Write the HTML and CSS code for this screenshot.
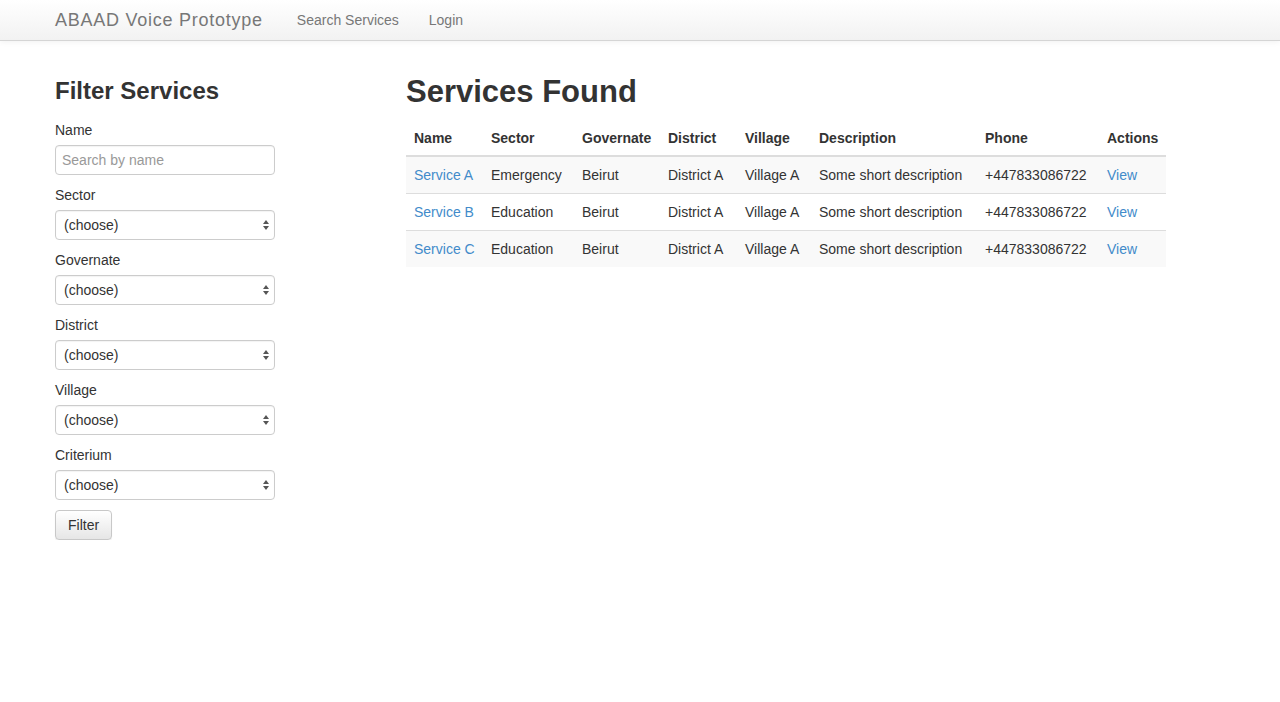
FILE: index.html
```html
<!DOCTYPE html>
<html lang="en">
<head>
<meta charset="utf-8">
<title>ABAAD Voice Prototype</title>
<link rel="stylesheet" href="styles.css">
</head>
<body>
<nav class="navbar">
  <div class="nav-inner">
    <a class="brand" href="#">ABAAD Voice Prototype</a>
    <ul class="nav-links">
      <li><a href="#">Search Services</a></li>
      <li><a href="#">Login</a></li>
    </ul>
  </div>
</nav>
<main class="page">
  <aside class="sidebar">
    <h3 class="side-title">Filter Services</h3>
    <form class="filter-form">
      <div class="group">
        <label class="lbl">Name</label>
        <input class="field" type="text" placeholder="Search by name">
      </div>
      <div class="group">
        <label class="lbl">Sector</label>
        <span class="select-wrap"><select class="field select"><option>(choose)</option></select></span>
      </div>
      <div class="group">
        <label class="lbl">Governate</label>
        <span class="select-wrap"><select class="field select"><option>(choose)</option></select></span>
      </div>
      <div class="group">
        <label class="lbl">District</label>
        <span class="select-wrap"><select class="field select"><option>(choose)</option></select></span>
      </div>
      <div class="group">
        <label class="lbl">Village</label>
        <span class="select-wrap"><select class="field select"><option>(choose)</option></select></span>
      </div>
      <div class="group">
        <label class="lbl">Criterium</label>
        <span class="select-wrap"><select class="field select"><option>(choose)</option></select></span>
      </div>
      <button class="btn" type="button">Filter</button>
    </form>
  </aside>
  <section class="results">
    <h2 class="main-title">Services Found</h2>
    <table class="table">
      <thead>
        <tr>
          <th class="c-name">Name</th>
          <th class="c-sector">Sector</th>
          <th class="c-gov">Governate</th>
          <th class="c-dist">District</th>
          <th class="c-vil">Village</th>
          <th class="c-desc">Description</th>
          <th class="c-phone">Phone</th>
          <th class="c-act">Actions</th>
        </tr>
      </thead>
      <tbody>
        <tr>
          <td><a href="#">Service A</a></td>
          <td>Emergency</td>
          <td>Beirut</td>
          <td>District A</td>
          <td>Village A</td>
          <td>Some short description</td>
          <td>+447833086722</td>
          <td><a href="#">View</a></td>
        </tr>
        <tr>
          <td><a href="#">Service B</a></td>
          <td>Education</td>
          <td>Beirut</td>
          <td>District A</td>
          <td>Village A</td>
          <td>Some short description</td>
          <td>+447833086722</td>
          <td><a href="#">View</a></td>
        </tr>
        <tr>
          <td><a href="#">Service C</a></td>
          <td>Education</td>
          <td>Beirut</td>
          <td>District A</td>
          <td>Village A</td>
          <td>Some short description</td>
          <td>+447833086722</td>
          <td><a href="#">View</a></td>
        </tr>
      </tbody>
    </table>
  </section>
</main>
</body>
</html>
```
FILE: styles.css
```css
* { box-sizing: border-box; }
html, body { margin: 0; padding: 0; }
body {
  font-family: "Liberation Sans", Arial, Helvetica, sans-serif;
  font-size: 14px;
  line-height: 20px;
  color: #333;
  background: #fff;
}
a { color: #428bca; text-decoration: none; }

.navbar {
  height: 41px;
  background: linear-gradient(to bottom, #ffffff 0%, #f2f2f2 100%);
  border-bottom: 1px solid #d5d5d5;
  box-shadow: 0 1px 6px rgba(0,0,0,0.06);
}
.nav-inner {
  width: 1170px;
  margin: 0 auto;
  display: flex;
  align-items: center;
  height: 40px;
}
.brand {
  font-size: 18px;
  color: #777;
  line-height: 20px;
  letter-spacing: 0.75px;
  padding-right: 19px;
}
.nav-links {
  list-style: none;
  margin: 0;
  padding: 0;
  display: flex;
}
.nav-links a {
  display: block;
  color: #777;
  padding: 0 15px;
  line-height: 20px;
}

.page {
  width: 1170px;
  margin: 0 auto;
  display: flex;
  align-items: flex-start;
}
.sidebar {
  width: 351px;
  flex: none;
}
.side-title {
  font-size: 24px;
  font-weight: bold;
  line-height: 26px;
  margin: 37px 0 16px;
  color: #333;
}
.filter-form { width: 220px; }
.group { margin-bottom: 10px; }
.lbl {
  display: block;
  margin-bottom: 5px;
  font-weight: normal;
  line-height: 20px;
}
.field {
  display: block;
  width: 220px;
  height: 30px;
  border: 1px solid #ccc;
  border-radius: 4px;
  background: #fff;
  font-family: inherit;
  font-size: 14px;
  color: #333;
  padding: 4px 6px;
  box-shadow: inset 0 1px 1px rgba(0,0,0,0.05);
  margin: 0;
}
.field::placeholder { color: #999; }
.select-wrap { position: relative; display: block; width: 220px; }
.select {
  -webkit-appearance: none;
  appearance: none;
  padding-left: 8px;
}
.select-wrap::before,
.select-wrap::after {
  content: "";
  position: absolute;
  right: 6px;
  width: 0;
  height: 0;
  border-left: 3px solid transparent;
  border-right: 3px solid transparent;
  pointer-events: none;
}
.select-wrap::before { top: 10px; border-bottom: 4px solid #555; }
.select-wrap::after { top: 16px; border-top: 4px solid #555; }

.btn {
  display: block;
  height: 30px;
  padding: 0 12px;
  font-family: inherit;
  font-size: 14px;
  color: #333;
  border: 1px solid #c8c8c8;
  border-radius: 4px;
  background: linear-gradient(to bottom, #ffffff 0%, #e6e6e6 100%);
  box-shadow: 0 1px 1px rgba(0,0,0,0.08);
}

.results { flex: 1; }
.main-title {
  font-size: 31px;
  font-weight: bold;
  line-height: 34px;
  margin: 34px 0 10px;
  color: #333;
}
.table {
  border-collapse: collapse;
  border-spacing: 0;
  width: 760px;
  table-layout: fixed;
}
.table th, .table td {
  padding: 8px;
  text-align: left;
  line-height: 20px;
  white-space: nowrap;
}
.table th {
  font-weight: bold;
  padding-top: 9px;
  padding-bottom: 7px;
  border-bottom: 2px solid #ddd;
}
.table td { border-top: 1px solid #ddd; }
.table tbody tr:first-child td { border-top: 0; }
.table tbody tr:nth-child(odd) td { background: #f9f9f9; }
.c-name { width: 77px; }
.c-sector { width: 91px; }
.c-gov { width: 86px; }
.c-dist { width: 77px; }
.c-vil { width: 74px; }
.c-desc { width: 166px; }
.c-phone { width: 122px; }
.c-act { width: 67px; }
```
